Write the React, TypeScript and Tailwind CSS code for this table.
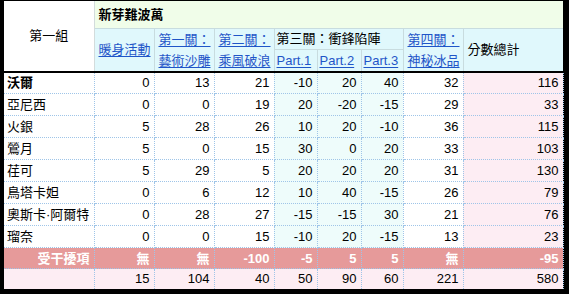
import React from 'react';

type Row = { name: string; bold?: boolean; vals: (number | string)[] };

const rows: Row[] = [
  { name: '沃爾', bold: true, vals: [0, 13, 21, -10, 20, 40, 32, 116] },
  { name: '亞尼西', vals: [0, 0, 19, 20, -20, -15, 29, 33] },
  { name: '火銀', vals: [5, 28, 26, 10, 20, -10, 36, 115] },
  { name: '鶯月', vals: [5, 0, 15, 30, 0, 20, 33, 103] },
  { name: '荏可', vals: [5, 29, 5, 20, 20, 20, 31, 130] },
  { name: '鳥塔卡妲', vals: [0, 6, 12, 10, 40, -15, 26, 79] },
  { name: '奧斯卡·阿爾特', vals: [0, 28, 27, -15, -15, 30, 21, 76] },
  { name: '瑠奈', vals: [0, 0, 15, -10, 20, -15, 13, 23] },
];

const penalty = ['無', '無', -100, -5, 5, 5, '無', -95];
const totals = [15, 104, 40, 50, 90, 60, 221, 580];

const cellBg = (i: number) => {
  if (i >= 3 && i <= 5) return 'bg-[#eefcfb]';
  if (i === 7) return 'bg-[#fdedf3]';
  return 'bg-white';
};

const link = 'text-[#1f55c8] underline underline-offset-2';

const App = () => {
  return (
    <div
      className="w-[569px] h-[294px] bg-black pt-px pl-1 text-[13px] text-black leading-none"
      style={{ fontFamily: '"Liberation Sans", "Noto Sans CJK TC", sans-serif' }}
    >
      <table className="w-[559px] table-fixed border-collapse">
        <colgroup>
          <col className="w-[90px]" />
          <col className="w-[60px]" />
          <col className="w-[60px]" />
          <col className="w-[60px]" />
          <col className="w-[43px]" />
          <col className="w-[44px]" />
          <col className="w-[42px]" />
          <col className="w-[60px]" />
          <col className="w-[100px]" />
        </colgroup>
        <thead>
          <tr className="h-[27px]">
            <th rowSpan={3} className="bg-white font-normal text-center border-r border-[#d3dcdc] border-b-2 border-b-black">
              第一組
            </th>
            <th colSpan={8} className="bg-[#f0fde9] text-left pl-1 font-bold border-b border-[#c8dcdf]">
              新芽難波萬
            </th>
          </tr>
          <tr className="h-[20px]">
            <th rowSpan={2} className="bg-[#e0f8fc] font-normal text-left pl-1 border-r border-[#c8dcdf] border-b-2 border-b-black">
              <span className={link}>暖身活動</span>
            </th>
            <th rowSpan={2} className="bg-[#e0f8fc] font-normal text-left pl-1 border-r border-[#c8dcdf] border-b-2 border-b-black leading-[21px]">
              <span className={link}>第一關：</span>
              <br />
              <span className={link}>藝術沙雕</span>
            </th>
            <th rowSpan={2} className="bg-[#e0f8fc] font-normal text-left pl-1 border-r border-[#c8dcdf] border-b-2 border-b-black leading-[21px]">
              <span className={link}>第二關：</span>
              <br />
              <span className={link}>乘風破浪</span>
            </th>
            <th colSpan={3} className="bg-[#e0f8fc] font-normal text-left pl-0.5 border-r border-[#c8dcdf] border-b border-[#c8dcdf]">
              第三關：衝鋒陷陣
            </th>
            <th rowSpan={2} className="bg-[#e0f8fc] font-normal text-left pl-1 border-r border-[#c8dcdf] border-b-2 border-b-black leading-[21px]">
              <span className={link}>第四關：</span>
              <br />
              <span className={link}>神秘冰品</span>
            </th>
            <th rowSpan={2} className="bg-[#e0f8fc] font-normal text-left pl-1 border-b-2 border-b-black">
              分數總計
            </th>
          </tr>
          <tr className="h-[21px]">
            {['Part.1', 'Part.2', 'Part.3'].map((p) => (
              <th key={p} className="bg-[#e0f8fc] font-normal text-left pl-0.5 border-r border-[#c8dcdf] border-b-2 border-b-black">
                <span className={link}>{p}</span>
              </th>
            ))}
          </tr>
        </thead>
        <tbody>
          {rows.map((r) => (
            <tr key={r.name} className="h-[22px]">
              <td className={`bg-white pl-[3px] border-r border-b border-dotted border-[#9fc5e8] ${r.bold ? 'font-bold' : ''}`}>
                {r.name}
              </td>
              {r.vals.map((v, i) => (
                <td key={i} className={`${cellBg(i)} text-right pr-1 border-r border-b border-dotted border-[#9fc5e8]`}>
                  {v}
                </td>
              ))}
            </tr>
          ))}
          <tr className="h-[21px] bg-[#e69a9a] text-white font-bold">
            <td className="text-right pr-1 border-r border-b border-dotted border-[#9fc5e8]">受干擾項</td>
            {penalty.map((v, i) => (
              <td key={i} className="text-right pr-1 border-r border-b border-dotted border-[#9fc5e8]">
                {v}
              </td>
            ))}
          </tr>
          <tr className="h-[20px] bg-[#fdedf3]">
            <td className="border-r border-dotted border-[#9fc5e8]"></td>
            {totals.map((v, i) => (
              <td key={i} className="text-right pr-1 border-r border-dotted border-[#9fc5e8]">
                {v}
              </td>
            ))}
          </tr>
        </tbody>
      </table>
    </div>
  );
};

export default App;
